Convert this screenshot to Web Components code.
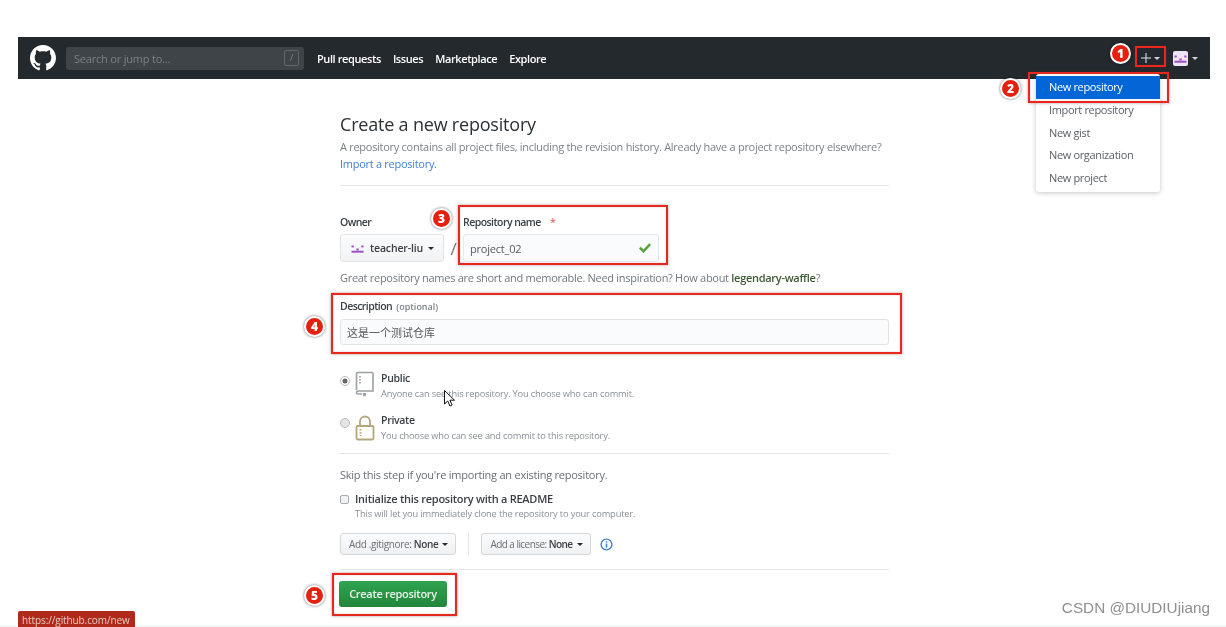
<!DOCTYPE html>
<html lang="en">
<head>
<meta charset="utf-8">
<title>Create a new repository</title>
<style>
  html, body { margin: 0; height: 627px; overflow: hidden; background: #fff; }
  body { position: relative; font-family: "Open Sans", "Noto Sans CJK SC", sans-serif; color: #24292e; padding-top: 37px; box-sizing: border-box; filter: blur(0.45px); background: linear-gradient(#fff 625px, #f1faf7 625px); }
</style>
</head>
<body>
<gh-header></gh-header>
<repo-form></repo-form>

<gh-dropdown></gh-dropdown>

<mark-box style="left:1135px;top:46px;width:31px;height:21px"></mark-box>
<mark-box style="left:1028px;top:72px;width:141px;height:31px"></mark-box>
<mark-box style="left:458px;top:205px;width:210px;height:60px"></mark-box>
<mark-box style="left:331px;top:293px;width:571px;height:61px"></mark-box>
<mark-box style="left:332px;top:573px;width:125px;height:43px"></mark-box>

<num-badge style="left:1110px;top:43px">1</num-badge>
<num-badge style="left:1000px;top:78px">2</num-badge>
<num-badge style="left:431px;top:208px">3</num-badge>
<num-badge style="left:304px;top:316px">4</num-badge>
<num-badge style="left:304px;top:585px">5</num-badge>

<mouse-arrow></mouse-arrow>
<status-tip>https://github.com/new</status-tip>
<water-mark>CSDN @DIUDIUjiang</water-mark>

<script>
const OCTOCAT = "M8 0C3.58 0 0 3.58 0 8c0 3.54 2.29 6.53 5.47 7.59.4.07.55-.17.55-.38 0-.19-.01-.82-.01-1.49-2.01.37-2.53-.49-2.69-.94-.09-.23-.48-.94-.82-1.13-.28-.15-.68-.52-.01-.53.63-.01 1.08.58 1.23.82.72 1.21 1.87.87 2.33.66.07-.52.28-.87.51-1.07-1.78-.2-3.64-.89-3.64-3.95 0-.87.31-1.59.82-2.15-.08-.2-.36-1.02.08-2.12 0 0 .67-.21 2.2.82.64-.18 1.32-.27 2-.27.68 0 1.36.09 2 .27 1.53-1.04 2.2-.82 2.2-.82.44 1.1.16 1.92.08 2.12.51.56.82 1.27.82 2.15 0 3.07-1.87 3.75-3.65 3.95.29.25.54.73.54 1.48 0 1.07-.01 1.93-.01 2.2 0 .21.15.46.55.38A8.013 8.013 0 0016 8c0-4.42-3.58-8-8-8z";

// little purple identicon used for the account
function identicon(size) {
  return `<svg width="${size}" height="${size}" viewBox="0 0 10 10" style="display:block">
    <g fill="#9c4fc4">
      <rect x="1" y="3" width="1.5" height="1.3"/><rect x="7.5" y="3" width="1.5" height="1.3"/>
      <rect x="4.2" y="5" width="1.6" height="1.3"/>
      <rect x="1" y="6.5" width="8" height="1.3"/>
    </g></svg>`;
}

class GhHeader extends HTMLElement {
  constructor() {
    super();
    const shadow = this.attachShadow({ mode: "open" });
    shadow.innerHTML = `
      <style>
        :host { display: flex; align-items: center; box-sizing: border-box; margin: 0 16px 0 18px; height: 42px; padding: 0 12px; background: #24292e; color: #fff; font-size: 11px; font-weight: 600; letter-spacing: -0.4px; }
        .logo { flex: none; margin-right: 10px; }
        .search { flex: none; display: flex; align-items: center; justify-content: space-between; box-sizing: border-box; width: 238px; height: 23px; padding: 0 5px 0 8px; margin-right: 13px; background: #3f4448; border-radius: 3px; color: #7b8085; font-weight: 400; font-size: 11px; letter-spacing: -0.2px; }
        .slash { width: 13px; height: 14px; border: 1px solid #62676c; border-radius: 2px; font-size: 9px; line-height: 14px; text-align: center; }
        nav { display: flex; gap: 12px; }
        .right { margin-left: auto; display: flex; align-items: center; }
        .plus { margin-right: 13px; display: flex; align-items: center; gap: 3px; }
        .caret { width: 0; height: 0; border: 3px solid transparent; border-top-color: #d5d7d9; border-bottom: 0; }
        .avatar { display: flex; align-items: center; gap: 4px; }
        .avatar div:first-child { background: #efe4f6; border-radius: 2px; }
      </style>
      <svg class="logo" width="26" height="26" viewBox="0 0 16 16" fill="#fff"><path d="${OCTOCAT}"/></svg>
      <div class="search"><span>Search or jump to...</span><span class="slash">/</span></div>
      <nav><span>Pull requests</span><span>Issues</span><span>Marketplace</span><span>Explore</span></nav>
      <div class="right">
        <div class="plus">
          <svg width="10" height="10" viewBox="0 0 10 10" fill="#c9cbcd"><rect x="4.4" y="0" width="1.2" height="10"/><rect x="0" y="4.4" width="10" height="1.2"/></svg>
          <span class="caret"></span>
        </div>
        <div class="avatar"><div>${identicon(15)}</div><span class="caret"></span></div>
      </div>`;
  }
}

class GhDropdown extends HTMLElement {
  constructor() {
    super();
    const shadow = this.attachShadow({ mode: "open" });
    const items = ["New repository", "Import repository", "New gist", "New organization", "New project"];
    shadow.innerHTML = `
      <style>
        :host { position: absolute; left: 1036px; top: 74px; width: 124px; box-sizing: border-box; padding: 2px 0 3px; background: #fff; border-radius: 3px; box-shadow: 0 1px 5px rgba(27,31,35,.25); font-size: 11px; letter-spacing: -0.35px; color: #5a5f64; }
        div { height: 22.5px; line-height: 22.5px; padding-left: 13px; }
        .on { background: #0366d6; color: #fff; height: 23px; }
      </style>
      ${items.map((t, i) => `<div class="${i === 0 ? "on" : ""}">${t}</div>`).join("")}`;
  }
}

class FieldLabel extends HTMLElement {
  constructor() {
    super();
    const shadow = this.attachShadow({ mode: "open" });
    shadow.innerHTML = `
      <style>
        :host { display: block; font-size: 10.5px; font-weight: 600; line-height: 16px; letter-spacing: -0.55px; color: #3b4046; }
      </style>
      <slot></slot>`;
  }
}

class SelectBtn extends HTMLElement {
  constructor() {
    super();
    const shadow = this.attachShadow({ mode: "open" });
    shadow.innerHTML = `
      <style>
        :host { display: inline-flex; align-items: center; box-sizing: border-box; height: 22px; padding: 0 7px 0 8px; gap: 3px; background: linear-gradient(#fafbfc, #eff1f3); border: 1px solid #d5d7d9; border-radius: 3px; font-size: 10px; letter-spacing: -0.35px; color: #6a6f74; white-space: nowrap; }
        b { font-weight: 600; color: #3b4046; }
        i { width: 0; height: 0; border: 3px solid transparent; border-top-color: #24292e; border-bottom: 0; margin-left: 1px; }
      </style>
      <span><slot></slot> <b>${this.getAttribute("value")}</b></span><i></i>`;
  }
}

class RadioOption extends HTMLElement {
  constructor() {
    super();
    const shadow = this.attachShadow({ mode: "open" });
    const on = this.hasAttribute("checked");
    const icon = on
      ? `<svg width="20" height="26" viewBox="0 0 20 26" fill="none" stroke="#9aa0a6" stroke-width="1.6"><path d="M1.5 19V3a1.5 1.5 0 0 1 1.5-1.5h14a1 1 0 0 1 1 1V20H3a1.5 1.5 0 0 0 0 3h4"/><path d="M5 5v9" stroke-dasharray="1.5 1.5"/><path d="M8 22v3.5l1.5-1 1.5 1V22z" fill="#9aa0a6" stroke="none"/></svg>`
      : `<svg width="20" height="26" viewBox="0 0 20 26" fill="none" stroke="#b5a77c" stroke-width="1.8"><path d="M5 11V6.5a5 5 0 0 1 10 0V11"/><rect x="1.5" y="11" width="17" height="13.5" rx="1.2"/><path d="M5.5 14v7" stroke-dasharray="1.5 1.5"/></svg>`;
    shadow.innerHTML = `
      <style>
        :host { display: flex; align-items: flex-start; height: 42px; }
        .radio { flex: none; box-sizing: border-box; width: 10px; height: 10px; margin: 5px 5px 0 0; border-radius: 50%; border: 1px solid #b9bcbf; background: ${on ? "radial-gradient(circle, #666 0 2.2px, #fff 2.8px)" : "#e4e5e6"}; }
        svg { flex: none; margin-right: 6px; margin-top: ${on ? 0 : 2}px; }
        .t { font-size: 10.5px; font-weight: 600; line-height: 15px; letter-spacing: -0.3px; color: #3b4046; }
        .s { font-size: 9.3px; line-height: 15px; letter-spacing: -0.19px; color: #8b9096; white-space: nowrap; }
      </style>
      <span class="radio"></span>
      ${icon}
      <div><div class="t">${this.getAttribute("label")}</div><div class="s"><slot></slot></div></div>`;
  }
}

class RepoForm extends HTMLElement {
  constructor() {
    super();
    const shadow = this.attachShadow({ mode: "open" });
    shadow.innerHTML = `
      <style>
        :host { display: block; width: 549px; margin: 32px 0 0 340px; color: #3b4046; font-size: 11px; letter-spacing: -0.2px; }
        h1 { margin: 0; font-size: 18px; font-weight: 400; line-height: 26px; letter-spacing: -0.2px; color: #2c3135; }
        .lead { margin: 1px 0 0; line-height: 17px; color: #7d8287; letter-spacing: -0.28px; white-space: nowrap; }
        a { color: #3f7fd3; text-decoration: none; }
        hr { border: 0; height: 1px; background: #e4e5e6; margin: 0; }
        .top { margin-top: 13px; }
        .row { display: flex; margin-top: 28px; }
        .owner { width: 104px; }
        .owner-btn { display: flex; align-items: center; gap: 5px; box-sizing: border-box; height: 28px; margin-top: 4px; padding: 0 9px; background: linear-gradient(#fafbfc, #f2f3f4); border: 1px solid #e1e3e5; border-radius: 3px; font-weight: 600; font-size: 10.5px; letter-spacing: -0.15px; color: #3b4046; white-space: nowrap; }
        .owner-btn i { width: 0; height: 0; border: 3px solid transparent; border-top-color: #24292e; border-bottom: 0; }
        .slash { width: 19px; margin-top: 25px; font-size: 17px; line-height: 20px; color: #777; text-align: center; }
        .name-input { display: flex; align-items: center; justify-content: space-between; box-sizing: border-box; width: 196px; height: 28px; margin-top: 4px; padding: 0 7px 0 6px; background: #fafbfc; border: 1px solid #e7e8ea; border-radius: 3px; color: #555a5f; }
        .req { color: #d9534f; margin-left: 7px; font-weight: 400; }
        .hint { margin-top: 8px; line-height: 16px; color: #73787d; letter-spacing: -0.29px; white-space: nowrap; }
        .hint b { font-weight: 600; color: #3d5a35; }
        .desc { margin-top: 12px; }
        .desc small { margin-left: 2px; font-size: 9px; color: #7d8287; font-weight: 600; letter-spacing: 0; }
        .desc-input { box-sizing: border-box; height: 26px; margin-top: 4px; padding: 0 6px; line-height: 24px; background: #fafbfc; border: 1px solid #e1e3e5; border-radius: 3px; color: #555a5f; font-family: "Noto Sans CJK SC", sans-serif; font-size: 11px; letter-spacing: 0; }
        .radios { margin-top: 26px; }
        .skip { margin-top: 13px; line-height: 16px; color: #6a6f74; letter-spacing: -0.24px; }
        .init { display: flex; align-items: center; gap: 6px; margin-top: 8px; line-height: 16px; font-weight: 600; letter-spacing: -0.26px; }
        .check { width: 7px; height: 7px; border: 1px solid #a9acaf; border-radius: 2px; background: #f1f2f3; }
        .init-s { margin: 0 0 0 15px; font-size: 9.3px; line-height: 14px; letter-spacing: -0.17px; color: #8b9096; }
        .selects { display: flex; align-items: center; margin-top: 12px; }
        .sep { width: 1px; height: 22px; background: #e4e5e6; margin: 0 12px; }
        .info { margin-left: 9px; }
        .end { margin-top: 14px; }
        .create { display: inline-block; box-sizing: border-box; width: 108px; height: 26px; margin: 11px 0 0 -1px; line-height: 26px; text-align: center; background: linear-gradient(#2ea44f, #22863a); border-radius: 3px; color: #e8f5ea; font-size: 11px; font-weight: 600; letter-spacing: -0.3px; }
      </style>
      <h1>Create a new repository</h1>
      <p class="lead">A repository contains all project files, including the revision history. Already have a project repository elsewhere?<br><a>Import a repository.</a></p>
      <hr class="top">
      <div class="row">
        <div class="owner">
          <field-label>Owner</field-label>
          <div class="owner-btn">${identicon(17)}<span>teacher-liu</span><i></i></div>
        </div>
        <div class="slash">/</div>
        <div>
          <field-label>Repository name <span class="req">*</span></field-label>
          <div class="name-input"><span>project_02</span>
            <svg width="12" height="10" viewBox="0 0 12 10" fill="#58a23c"><path d="M12 2 4.5 10 0 5.5l1.7-1.7 2.8 2.8L10.3.3z"/></svg>
          </div>
        </div>
      </div>
      <div class="hint">Great repository names are short and memorable. Need inspiration? How about <b>legendary-waffle</b>?</div>
      <div class="desc">
        <field-label>Description <small>(optional)</small></field-label>
        <div class="desc-input">这是一个测试仓库</div>
      </div>
      <div class="radios">
        <radio-option label="Public" checked>Anyone can see this repository. You choose who can commit.</radio-option>
        <radio-option label="Private" style="height:40px">You choose who can see and commit to this repository.</radio-option>
      </div>
      <hr>
      <div class="skip">Skip this step if you're importing an existing repository.</div>
      <div class="init"><span class="check"></span>Initialize this repository with a README</div>
      <p class="init-s">This will let you immediately clone the repository to your computer.</p>
      <div class="selects">
        <select-btn value="None">Add .gitignore:</select-btn>
        <span class="sep"></span>
        <select-btn value="None" style="letter-spacing:-0.55px">Add a license:</select-btn>
        <svg class="info" width="13" height="13" viewBox="0 0 14 14" fill="none"><circle cx="7" cy="7" r="5.8" stroke="#3f7fd3" stroke-width="1.5"/><rect x="6.2" y="6" width="1.6" height="4.5" fill="#3f7fd3"/><rect x="6.2" y="3.4" width="1.6" height="1.6" fill="#3f7fd3"/></svg>
      </div>
      <hr class="end">
      <div class="create">Create repository</div>`;
  }
}

class MarkBox extends HTMLElement {
  constructor() {
    super();
    const shadow = this.attachShadow({ mode: "open" });
    shadow.innerHTML = `
      <style>
        :host { position: absolute; box-sizing: border-box; border: 2px solid #e8281e; box-shadow: 0 0 3px rgba(90,40,40,.45), inset 0 0 2px rgba(90,40,40,.25); }
      </style>`;
  }
}

class NumBadge extends HTMLElement {
  constructor() {
    super();
    const shadow = this.attachShadow({ mode: "open" });
    shadow.innerHTML = `
      <style>
        :host { position: absolute; box-sizing: border-box; width: 21px; height: 21px; border: 2px solid #fff; border-radius: 50%; background: #e6200f; color: #fff; box-shadow: 0 0 3px rgba(0,0,0,.6); font: 800 12px/17px "Open Sans", sans-serif; text-align: center; }
      </style>
      <slot></slot>`;
  }
}

class MouseArrow extends HTMLElement {
  constructor() {
    super();
    const shadow = this.attachShadow({ mode: "open" });
    shadow.innerHTML = `
      <style>
        :host { position: absolute; left: 444px; top: 390px; width: 12px; height: 17px; }
        svg { display: block; }
      </style>
      <svg width="12" height="17" viewBox="0 0 12 17"><path d="M.5.5v13.5l3.2-3 2.2 5 2.2-1-2.2-4.8h4.6z" fill="#fff" stroke="#111" stroke-width="1"/></svg>`;
  }
}

class StatusTip extends HTMLElement {
  constructor() {
    super();
    const shadow = this.attachShadow({ mode: "open" });
    shadow.innerHTML = `
      <style>
        :host { position: absolute; left: 18px; top: 611px; width: 117px; height: 16px; box-sizing: border-box; padding-left: 4px; background: #b02a1c; border-radius: 2px 2px 0 0; color: #e9c9c2; font-size: 10px; line-height: 18px; letter-spacing: -0.1px; }
      </style>
      <slot></slot>`;
  }
}

class WaterMark extends HTMLElement {
  constructor() {
    super();
    const shadow = this.attachShadow({ mode: "open" });
    shadow.innerHTML = `
      <style>
        :host { position: absolute; right: 16px; top: 599px; font-family: "Liberation Sans", sans-serif; font-size: 15.3px; line-height: 18px; color: #8f8f8f; }
      </style>
      <slot></slot>`;
  }
}

customElements.define("gh-header", GhHeader);
customElements.define("gh-dropdown", GhDropdown);
customElements.define("field-label", FieldLabel);
customElements.define("select-btn", SelectBtn);
customElements.define("radio-option", RadioOption);
customElements.define("repo-form", RepoForm);
customElements.define("mark-box", MarkBox);
customElements.define("num-badge", NumBadge);
customElements.define("mouse-arrow", MouseArrow);
customElements.define("status-tip", StatusTip);
customElements.define("water-mark", WaterMark);
</script>
</body>
</html>
